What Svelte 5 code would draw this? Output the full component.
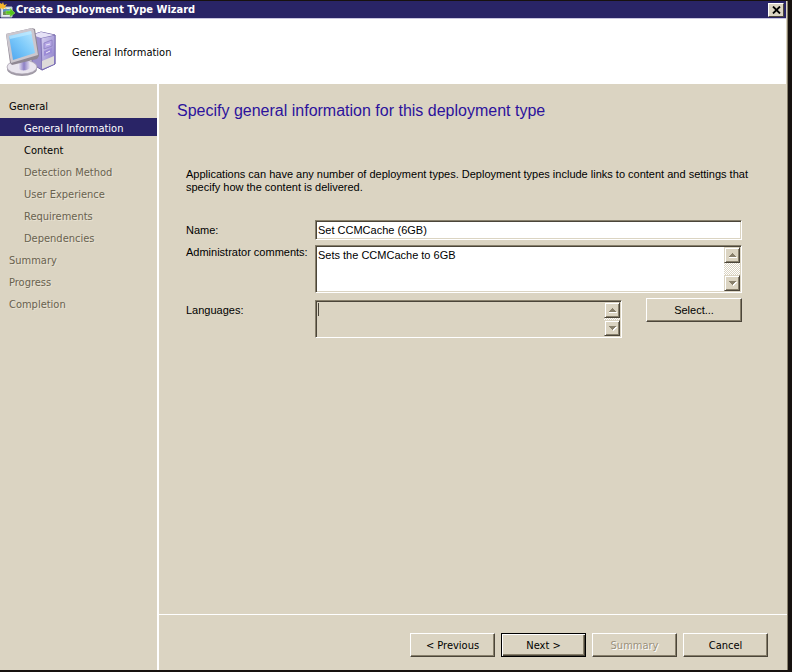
<script>
	let steps = [
		{ title: 'General', state: 'ready' },
		{ title: 'General Information', state: 'current', child: true },
		{ title: 'Content', state: 'ready', child: true },
		{ title: 'Detection Method', state: 'pending', child: true },
		{ title: 'User Experience', state: 'pending', child: true },
		{ title: 'Requirements', state: 'pending', child: true },
		{ title: 'Dependencies', state: 'pending', child: true },
		{ title: 'Summary', state: 'pending' },
		{ title: 'Progress', state: 'pending' },
		{ title: 'Completion', state: 'pending' }
	];

	let name = 'Set CCMCache (6GB)';
	let comments = 'Sets the CCMCache to 6GB';
	let languages = '';
</script>

{#snippet scrollbar(label)}
	<div class="scrollbar">
		<button type="button" class="scroll-button" aria-label={`Scroll ${label} up`}>
			<svg width="9" height="6" viewBox="0 0 9 6" shape-rendering="crispEdges">
				<path d="M1 5h8v1H1z" fill="#fff" />
				<path d="M4 1h1v1h1v1h1v1h1v1H1V4h1V3h1V2h1z" fill="#877f6b" />
			</svg>
		</button>
		<button type="button" class="scroll-button" aria-label={`Scroll ${label} down`}>
			<svg width="9" height="6" viewBox="0 0 9 6" shape-rendering="crispEdges">
				<path d="M2 2h7v1H8v1H7v1H6v1H5V5H4V4H3V3H2z" fill="#fff" />
				<path d="M1 1h7v1H7v1H6v1H5v1H4V4H3V3H2V2H1z" fill="#877f6b" />
			</svg>
		</button>
	</div>
{/snippet}

<div class="window">
	<div class="title-bar">
		<svg class="title-icon" width="15" height="16" viewBox="0 0 15 16">
			<path d="M1 5h11v10H1z" fill="#e8edf0" stroke="#b9c3cc" />
			<path d="M3 7h7v5H3z" fill="#5b95c6" />
			<path d="M3 10l3-1 4 2v2H3z" fill="#6d8c54" />
			<path d="M6 9h4V6l5 5-5 4v-3H6z" fill="#55c51c" stroke="#a4e67c" stroke-width=".5" />
			<path d="M3 0l1 3 3-1-2 3 2 2-3-1-1 2-1-2-2 1V1l2 1z" fill="#f5b82e" />
		</svg>
		<span class="title">Create Deployment Type Wizard</span>
		<button type="button" class="close" aria-label="Close">
			<svg width="9" height="8" viewBox="0 0 9 8">
				<path d="M1 0.5L8 7.5M8 0.5L1 7.5" stroke="#000" stroke-width="1.8" />
			</svg>
		</button>
	</div>

	<header>
		<svg width="52" height="50" viewBox="0 0 52 50">
			<defs>
				<linearGradient id="screen" x1="0" y1="1" x2="1" y2="0">
					<stop offset="0" stop-color="#4ba4ee" />
					<stop offset=".5" stop-color="#7cc9fa" />
					<stop offset="1" stop-color="#b9e8ff" />
				</linearGradient>
				<linearGradient id="tower" x1="0" y1="0" x2="1" y2="1">
					<stop offset="0" stop-color="#d9d3f2" />
					<stop offset="1" stop-color="#8374c4" />
				</linearGradient>
				<linearGradient id="stand" x1="0" y1="0" x2="1" y2="0">
					<stop offset="0" stop-color="#f4f1f8" />
					<stop offset=".5" stop-color="#8c7fc4" />
					<stop offset="1" stop-color="#e5e0f0" />
				</linearGradient>
			</defs>
			<path d="M27 7l9-3 14 3v29l-13 6-10-6z" fill="#9a8fcb" stroke="#7568a8" />
			<path d="M36 10l14-3v29l-13 6z" fill="url(#tower)" stroke="#7467ad" stroke-width=".8" />
			<path d="M27 7l9-3 13 3-13 3z" fill="#e6e2f6" />
			<path d="M37 33l12-5v8l-12 5z" fill="#dedbd9" />
			<path d="M39 15l8-3v6l-8 3z" fill="#b5a7e5" stroke="#8678bd" stroke-width=".7" />
			<path d="M39 23l8-3v5l-8 3z" fill="#9b8bd6" />
			<path d="M41 17l4-1M41 25l4-2" stroke="#efeafa" />
			<ellipse cx="17" cy="41" rx="15" ry="7" fill="#a09aa6" />
			<ellipse cx="17" cy="39" rx="15" ry="7" fill="#e9e5ee" stroke="#a39ba9" stroke-width=".7" />
			<path d="M15 31h9l1 8c0 4-12 5-12 0z" fill="url(#stand)" />
			<path d="M1 6l26-6 3 1 4 27-2 3-25 6-2-2z" fill="#8f8793" />
			<path d="M1 6l26-6 2 2 4 25-27 8z" fill="#ccc7ce" />
			<path d="M4 8l22-5 4 22-22 7z" fill="url(#screen)" />
			<path d="M4 8l22-5 1 3-22 5z" fill="#c7edff" opacity=".6" />
		</svg>
		<span>General Information</span>
	</header>

	<div class="body">
		<nav aria-label="Wizard steps">
			{#each steps as { title, state, child }}
				<div class="step {state}" class:child aria-current={state == 'current' ? 'step' : undefined}>
					{title}
				</div>
			{/each}
		</nav>

		<form on:submit|preventDefault>
			<main>
				<h1>Specify general information for this deployment type</h1>
				<p>
					Applications can have any number of deployment types. Deployment types include links to
					content and settings that specify how the content is delivered.
				</p>

				<div class="fields">
					<label for="name">Name:</label>
					<input id="name" type="text" class="sunken" bind:value={name} />

					<label for="comments">Administrator comments:</label>
					<div class="sunken area comments">
						<textarea id="comments" bind:value={comments}></textarea>
						{@render scrollbar('comments')}
					</div>

					<label class="languages-label" for="languages">Languages:</label>
					<div class="languages-row">
						<div class="sunken area languages">
							<textarea id="languages" readonly value={languages}></textarea>
							<span class="caret"></span>
							{@render scrollbar('languages')}
						</div>
						<button type="button" class="button select">Select...</button>
					</div>
				</div>
			</main>

			<footer>
				<button type="button" class="button">&lt; Previous</button>
				<button type="submit" class="button default">Next &gt;</button>
				<button type="button" class="button" disabled>Summary</button>
				<button type="button" class="button">Cancel</button>
			</footer>
		</form>
	</div>
</div>

<style>
	:global(body) {
		background: #17110f;
	}

	.window,
	.window * {
		box-sizing: border-box;
	}

	.window {
		--face: #dbd4c2;
		--shadow: #877f6b;
		--dark: #4b4539;
		--navy: #292466;
		--ui: 'DejaVu Sans Condensed', Tahoma, sans-serif;
		--sans: 'Liberation Sans', Arial, sans-serif;
		display: flex;
		flex-direction: column;
		min-height: calc(100vh - 3px);
		margin: 1px 4px 2px 0;
		border-right: 1px solid var(--shadow);
		background: var(--face);
		color: #000;
		font: 11px/13px var(--ui);
	}

	button,
	input,
	textarea {
		margin: 0;
		font: inherit;
		color: inherit;
		border-radius: 0;
	}

	.title-bar {
		display: flex;
		align-items: center;
		height: 18px;
		margin-right: 1px;
		padding-right: 2px;
		background: var(--navy);
		border-bottom: 1px solid #c9c5e0;
		color: #fff;
	}

	.title {
		flex: 1;
		margin-left: 1px;
		font-weight: bold;
	}

	.close {
		display: flex;
		align-items: center;
		justify-content: center;
		width: 16px;
		height: 14px;
		padding: 0;
		background: var(--face);
		border: 1px solid;
		border-color: #fff var(--dark) var(--dark) #fff;
	}

	header {
		display: flex;
		align-items: center;
		gap: 15px;
		height: 65px;
		margin-right: 1px;
		padding: 2px 0 0 5px;
		background: #fff;
	}

	.body {
		flex: 1;
		display: flex;
	}

	nav {
		width: 159px;
		padding-top: 12px;
		border-right: 2px solid #fff;
	}

	.step {
		height: 18px;
		margin-bottom: 4px;
		padding-left: 9px;
		line-height: 21px;
	}

	.child {
		padding-left: 24px;
	}

	.current {
		background: var(--navy);
		color: #fff;
	}

	.pending {
		color: #69624f;
		text-shadow: 1px 1px #e8e2d2;
	}

	form {
		flex: 1;
		display: flex;
		flex-direction: column;
	}

	main {
		flex: 1;
		padding: 17px 45px 16px 27px;
		font-family: var(--sans);
	}

	h1 {
		margin: 0 0 47px -9px;
		font-size: 16px;
		line-height: 20px;
		font-weight: normal;
		color: #2c129c;
	}

	p {
		margin: 0 -20px 26px 0;
	}

	.fields {
		display: grid;
		grid-template-columns: 129px 1fr;
		row-gap: 5px;
	}

	label {
		padding-top: 4px;
	}

	.fields label[for='comments'] {
		padding-top: 1px;
	}

	.languages-label {
		padding-top: 6px;
	}

	.sunken {
		border: 1px solid;
		border-color: var(--shadow) #fff #fff var(--shadow);
		box-shadow: inset 1px 1px var(--dark), inset -1px -1px var(--face);
		background: #fff;
	}

	input {
		width: 100%;
		height: 20px;
		padding: 1px 2px 2px;
		outline: 0;
	}

	.area {
		position: relative;
		display: flex;
		padding: 1px;
	}

	.comments {
		height: 48px;
	}

	textarea {
		flex: 1;
		min-width: 0;
		padding: 2px 1px 1px;
		border: 0;
		outline: 0;
		background: transparent;
		resize: none;
		overflow: hidden;
	}

	.languages-row {
		display: flex;
		align-items: flex-start;
		gap: 24px;
	}

	.languages {
		flex: 1;
		height: 38px;
		margin-top: 2px;
		background: var(--face);
	}

	.caret {
		position: absolute;
		top: 2px;
		left: 2px;
		width: 1px;
		height: 13px;
		background: var(--dark);
	}

	.scrollbar {
		display: flex;
		flex-direction: column;
		justify-content: space-between;
		width: 16px;
		background: repeating-conic-gradient(#fff 0 25%, var(--face) 0 50%) 0 0 / 2px 2px;
	}

	.scroll-button {
		display: flex;
		align-items: center;
		justify-content: center;
		height: 16px;
		padding: 0;
		background: var(--face);
		border: 1px solid;
		border-color: var(--face) var(--dark) var(--dark) var(--face);
		box-shadow: inset 1px 1px #fff, inset -1px -1px var(--shadow);
	}

	.button {
		width: 85px;
		height: 24px;
		padding: 0;
		background: var(--face);
		border: 1px solid;
		border-color: #fff var(--dark) var(--dark) #fff;
		box-shadow: inset -1px -1px var(--shadow);
	}

	.select {
		width: 96px;
		font-family: var(--sans);
	}

	.default {
		border-color: #000;
		box-shadow: inset 1px 1px #fff, inset -1px -1px var(--dark), inset -2px -2px var(--shadow);
	}

	.button:disabled {
		color: #9a917d;
		text-shadow: 1px 1px #fff;
	}

	footer {
		display: flex;
		justify-content: flex-end;
		gap: 6px;
		padding: 18px 19px 13px;
		border-top: 1px solid #fff;
	}
</style>
